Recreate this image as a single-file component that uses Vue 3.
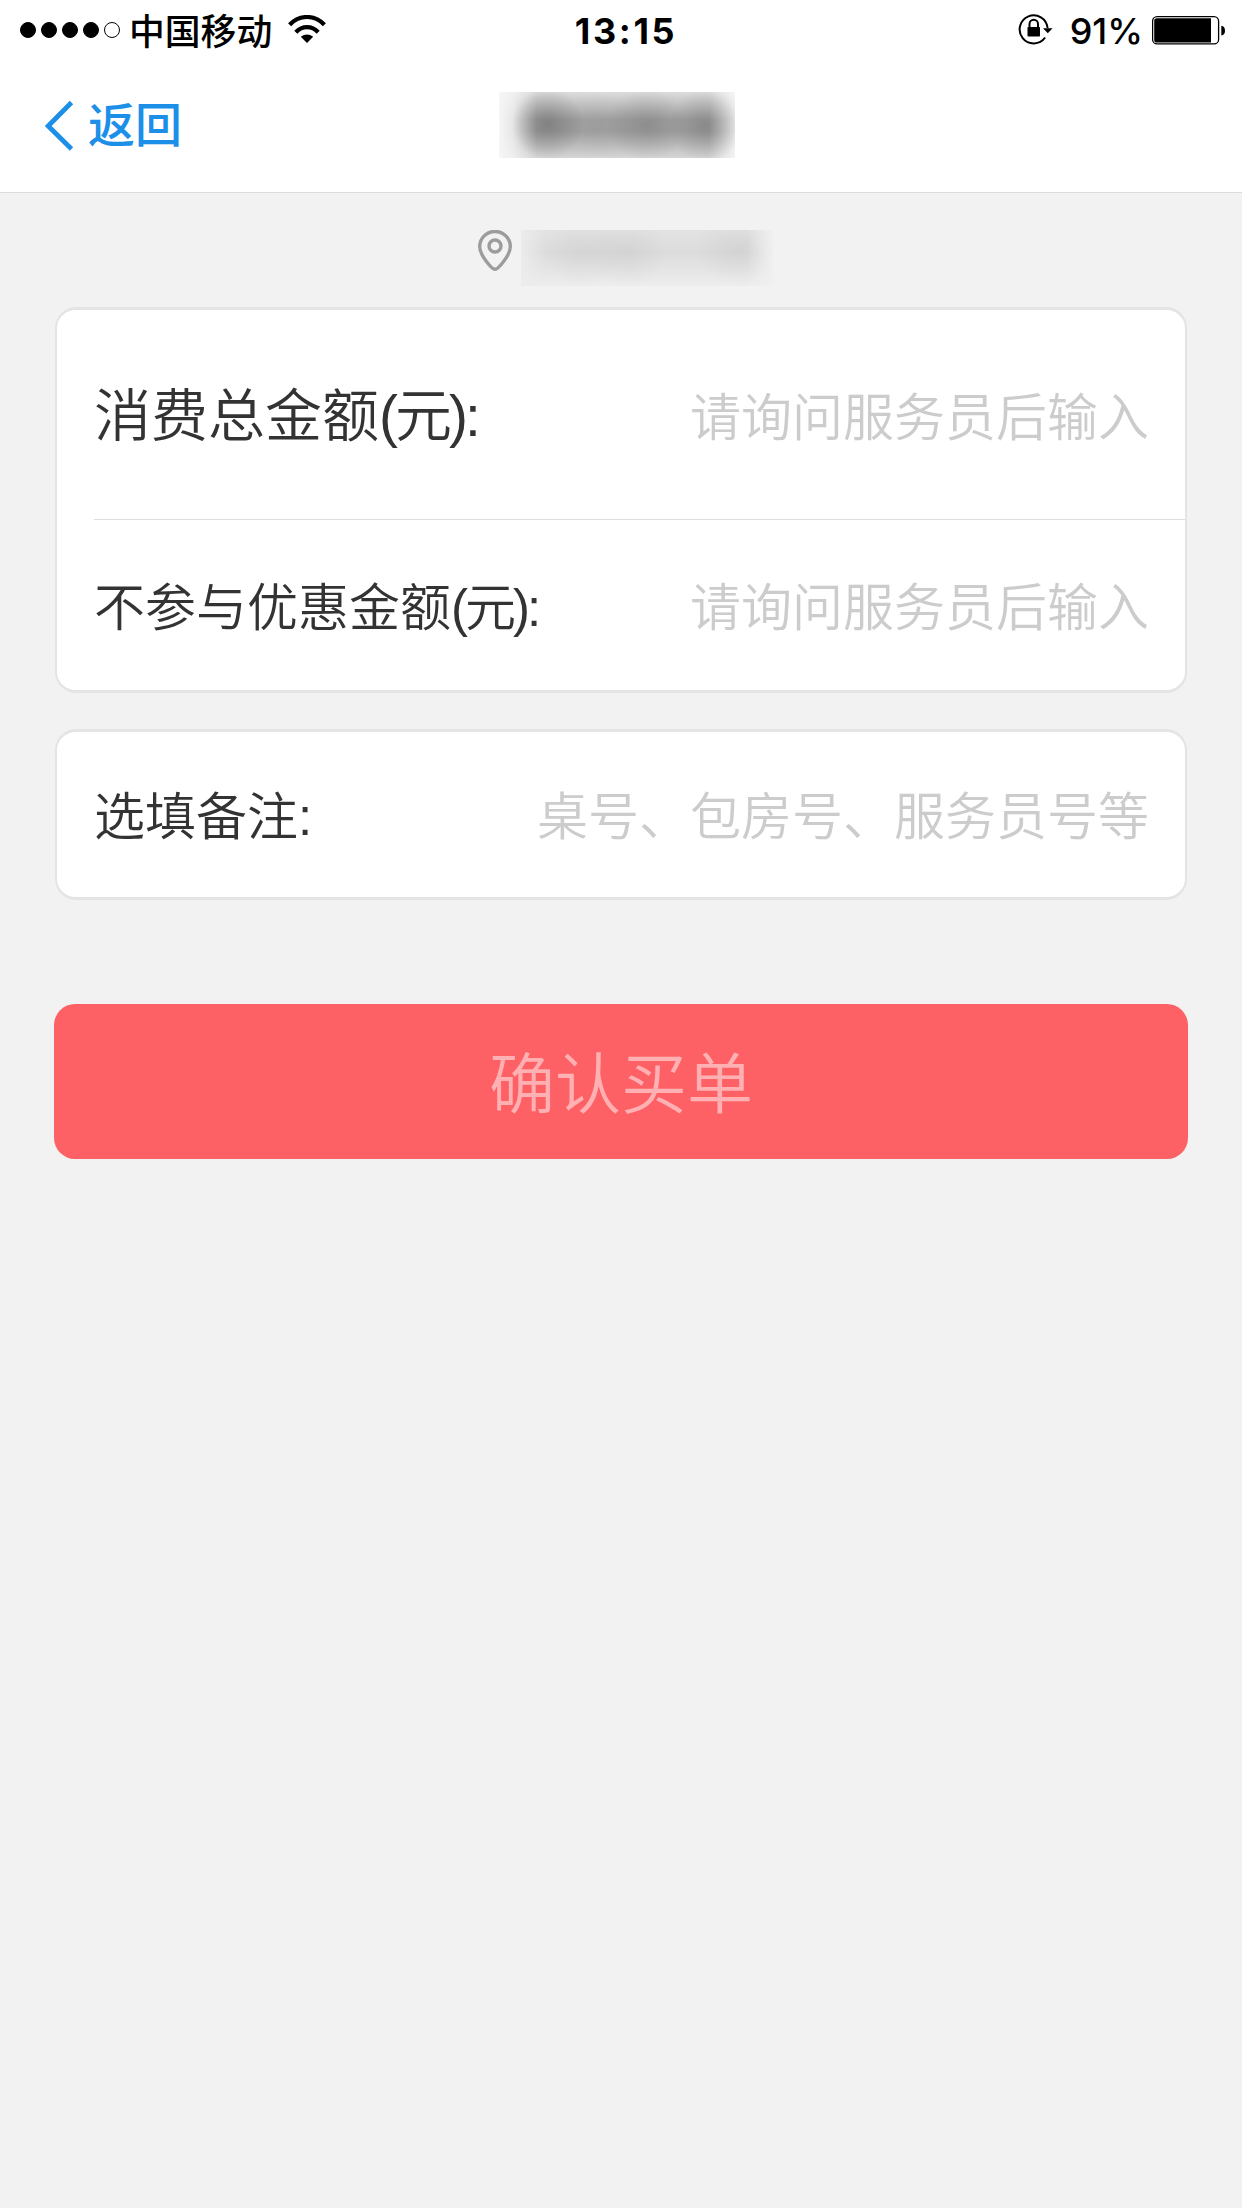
<script setup>
const signal = [true, true, true, true, false]
const amounts = [
  { label: '消费总金额', unit: '(元):', hint: '请询问服务员后输入', size: 'large' },
  { label: '不参与优惠金额', unit: '(元):', hint: '请询问服务员后输入', size: 'normal' },
]
</script>

<template>
  <div class="screen">
    <header class="top">
      <div class="status">
        <div class="status-left">
          <div class="signal">
            <i v-for="(on, i) in signal" :key="i" class="dot" :class="{ on }"></i>
          </div>
          <span class="carrier">中国移动</span>
          <svg class="wifi" width="38" height="29" viewBox="0 0 38 29">
            <g fill="none" stroke="#000" stroke-width="4.2">
              <path d="M1.6 9.8C11.4-.6 26.6-.6 36.4 9.8" />
              <path d="M7.8 17.2C14.2 10.4 23.8 10.4 30.2 17.2" />
            </g>
            <path d="M12.8 21.8Q19 17 25.2 21.8L19 28Z" />
          </svg>
        </div>
        <span class="clock">13:15</span>
        <div class="status-right">
          <svg class="lock" width="36" height="32" viewBox="0 0 36 32">
            <path d="M27.1 24.5A14 14 0 1 1 29.6 15" fill="none" stroke="#000" stroke-width="2" />
            <path d="M25 15.3H34.6L29.8 20.3Z" />
            <rect x="9.5" y="14" width="12.5" height="9.6" rx="0.8" />
            <path d="M11.5 15V11a4.25 4.25 0 0 1 8.5 0v4" fill="none" stroke="#000" stroke-width="2" />
          </svg>
          <span class="percent">91%</span>
          <svg class="battery" width="74" height="29" viewBox="0 0 74 29">
            <rect x="0.6" y="0.7" width="66" height="27.2" rx="4.5" fill="#fff" stroke="#000" stroke-width="1.3" />
            <path d="M4.8 2.3H59V26.6H4.8Q2.2 26.6 2.2 24V5Q2.2 2.3 4.8 2.3Z" />
            <path d="M69.3 9.8Q73 10.5 73 14.7T69.3 19.6Z" />
          </svg>
        </div>
      </div>
      <nav class="nav">
        <div class="back">
          <svg width="30" height="52" viewBox="0 0 30 52">
            <path d="M26.5 2.5L3.2 26L26.5 49" fill="none" stroke="#1c8fe8" stroke-width="4.8" />
          </svg>
          <span>返回</span>
        </div>
        <div class="title-mask"></div>
      </nav>
    </header>

    <main class="content">
      <div class="address">
        <svg width="34" height="42" viewBox="0 0 34 42" fill="none" stroke="#9c9c9c" stroke-width="3.4">
          <path d="M17 39.3C14 39.3 1.7 25.5 1.7 16.5A15.3 15 0 0 1 32.3 16.5C32.3 25.5 20 39.3 17 39.3Z" />
          <circle cx="17" cy="16" r="6" />
        </svg>
        <div class="address-mask"></div>
      </div>

      <section class="card">
        <div v-for="row in amounts" :key="row.label" class="row" :class="row.size">
          <label>{{ row.label }}<span class="unit">{{ row.unit }}</span></label>
          <span class="hint">{{ row.hint }}</span>
        </div>
      </section>

      <section class="card remark">
        <div class="row">
          <label>选填备注:</label>
          <span class="hint">桌号、包房号、服务员号等</span>
        </div>
      </section>

      <button class="confirm" type="button">确认买单</button>
    </main>
  </div>
</template>

<style>
body {
  background: #f2f2f2;
}
</style>

<style scoped>
.screen {
  width: 1242px;
  height: 2208px;
  overflow: hidden;
  background: #f2f2f2;
  font-family: "Liberation Sans", "Noto Sans CJK SC", sans-serif;
  color: #333;
}
.top {
  box-sizing: border-box;
  height: 193px;
  background: #fff;
  border-bottom: 1px solid #dcdcdc;
}
.status {
  display: grid;
  grid-template-columns: 1fr auto 1fr;
  align-items: center;
  height: 60px;
  padding: 0 16px 0 20px;
  color: #000;
}
.status-left,
.status-right,
.signal {
  display: flex;
  align-items: center;
}
.signal {
  gap: 5px;
}
.dot {
  box-sizing: border-box;
  width: 16px;
  height: 16px;
  border: 1.4px solid #000;
  border-radius: 50%;
}
.dot.on {
  background: #000;
}
.carrier {
  margin-left: 9px;
  padding-bottom: 2px;
  font: 500 35.8px/58px "Noto Sans CJK SC", sans-serif;
}
.wifi {
  margin: 0 0 1px 16px;
}
.clock {
  padding: 2px 0 0 6px;
  font: 700 36px/58px Inter, sans-serif;
  letter-spacing: 2.6px;
}
.status-right {
  justify-content: flex-end;
}
.lock {
  margin-bottom: 2px;
}
.percent {
  margin: 2px 9px 0 16px;
  font: 500 36px/58px Inter, sans-serif;
}
.battery {
  margin-top: 1px;
}
.nav {
  display: grid;
  grid-template-columns: 499px 236px;
  align-items: center;
  height: 130px;
}
.back {
  display: flex;
  align-items: center;
  gap: 13px;
  padding: 2px 0 0 45px;
  color: #1c8fe8;
  font-size: 47px;
  font-weight: 500;
  line-height: 60px;
}
.title-mask {
  height: 66px;
  background:
    radial-gradient(ellipse 36px 36px at 49px 32px, rgba(70, 70, 70, 0.36), transparent),
    radial-gradient(ellipse 40px 34px at 100px 35px, rgba(80, 80, 80, 0.08), transparent),
    radial-gradient(ellipse 40px 36px at 148px 33px, rgba(80, 80, 80, 0.26), transparent),
    radial-gradient(ellipse 36px 36px at 206px 34px, rgba(80, 80, 80, 0.3), transparent),
    linear-gradient(90deg, #f6f6f6, rgba(246, 246, 246, 0.8) 14px, transparent 38px, transparent 210px, rgba(255, 255, 255, 0.75)),
    linear-gradient(#dcdcdc, #a3a3a3 42%, #a3a3a3 60%, #d6d6d6);
}
.content {
  padding: 37px 54px 0;
}
.address {
  display: flex;
  justify-content: center;
  gap: 9px;
  height: 56px;
  padding-left: 8px;
}
.address-mask {
  width: 252px;
  background:
    linear-gradient(90deg, #ececec, transparent 24px, transparent 226px, #f0f0f0),
    radial-gradient(ellipse 40px 34px at 62px 22px, rgba(190, 190, 190, 0.25), transparent),
    radial-gradient(ellipse 40px 34px at 106px 22px, rgba(190, 190, 190, 0.3), transparent),
    radial-gradient(ellipse 46px 34px at 218px 20px, rgba(190, 190, 190, 0.3), transparent),
    linear-gradient(#e3e3e3, #dcdcdc 40%, #ededed);
}
.card {
  box-sizing: border-box;
  margin: 21px 1px 0;
  border: 2px solid #e4e4e4;
  border-width: 3px 2px;
  border-radius: 21px;
  background: #fff;
}
.row {
  box-sizing: border-box;
  display: flex;
  align-items: center;
  justify-content: space-between;
  height: 170px;
  margin-left: 37px;
  padding: 0 36px 3px 0;
  font-size: 51px;
  font-weight: 350;
}
.row.large {
  height: 210px;
  padding-bottom: 1px;
  border-bottom: 1px solid #dedede;
}
.row.large label {
  padding-bottom: 7px;
  font-size: 57px;
}
.unit {
  letter-spacing: -3px;
}
.hint {
  color: #ccc;
  font-size: 51px;
}
.card.remark {
  margin-top: 36px;
}
.remark .row {
  height: 165px;
}
.confirm {
  display: block;
  width: 1134px;
  height: 155px;
  margin-top: 104px;
  padding: 0 0 5px;
  border: 0;
  border-radius: 21px;
  background: #fd6166;
  color: #ffb0b2;
  font: 350 66px/150px "Noto Sans CJK SC", sans-serif;
}
</style>
